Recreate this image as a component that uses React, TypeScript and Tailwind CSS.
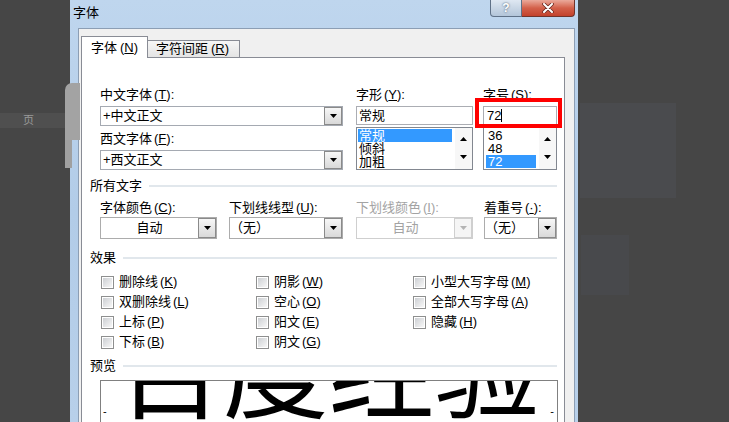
import React from 'react';

function Tri({ color = '#000', up = false }: { color?: string; up?: boolean }) {
  return (
    <svg width="7" height="4" viewBox="0 0 7 4">
      <polygon points={up ? '0,4 7,4 3.5,0' : '0,0 7,0 3.5,4'} fill={color} />
    </svg>
  );
}

function DropBtn({ className, dim = false }: { className: string; dim?: boolean }) {
  return (
    <div
      className={`flex shrink-0 items-center justify-center border ${
        dim ? 'border-[#cfcfcf] bg-[#f5f5f5]' : 'border-[#8a8a8a] bg-gradient-to-b from-[#f7f7f7] to-[#d9d9d9]'
      } ${className}`}
    >
      <Tri color={dim ? '#b4b4b4' : '#000'} />
    </div>
  );
}

function Lbl({ t, k, dim = false }: { t: string; k: string; dim?: boolean }) {
  return (
    <div className={`h-[14px] whitespace-nowrap leading-[14px] ${dim ? 'text-[#a3a3a3]' : ''}`}>
      {t}
      <span className="ml-[2px]">
        (<span className="underline">{k}</span>):
      </span>
    </div>
  );
}

function Group({ t, className }: { t: string; className: string }) {
  return (
    <div className={`flex h-[14px] shrink-0 items-center pl-[8px] pr-[7px] ${className}`}>
      <span className="leading-[14px]">{t}</span>
      <div className="ml-[7px] h-[2px] flex-1 bg-[#e1e7ec]" />
    </div>
  );
}

function Check({ t, k }: { t: string; k: string }) {
  return (
    <div className="flex h-[20px] items-center">
      <div className="h-[13px] w-[13px] border border-[#8e8f8f] bg-white p-[1px]">
        <div className="h-full w-full bg-gradient-to-br from-[#cdd0d4] to-[#f7f7f7]" />
      </div>
      <span className="ml-[5px] whitespace-nowrap leading-[14px]">
        {t}
        <span className="ml-[2px]">
          (<span className="underline">{k}</span>)
        </span>
      </span>
    </div>
  );
}

function ScrollBtns() {
  return (
    <div className="flex w-[17px] shrink-0 flex-col bg-[#f7f7f7]">
      <div className="flex h-[20px] items-center justify-center pt-[2px]">
        <Tri up />
      </div>
      <div className="flex h-[20px] items-center justify-center pb-[2px]">
        <Tri />
      </div>
    </div>
  );
}

export default function App() {
  return (
    <div className="relative flex h-[422px] w-[729px] overflow-hidden bg-[#464646] text-[13px] text-black [font-family:'Liberation_Sans','Noto_Sans_CJK_SC',sans-serif]">
      {/* page behind, left */}
      <div className="flex w-[70px] shrink-0 flex-col">
        <div className="mt-[113px] flex h-[15px] items-center bg-[#4f4f4f] pl-[23px] text-[11px] leading-none text-[#9a9a9a]">
          页
        </div>
      </div>

      {/* dialog */}
      <div className="flex w-[508px] shrink-0 flex-col bg-gradient-to-b from-[#bfd6ee] via-[#b2cce8] to-[#b8d0ea]">
        <div className="flex h-[28px] shrink-0 items-start">
          <div className="mt-[5px] pl-[3px] text-[13px] leading-[16px]">字体</div>
          <div className="flex-1" />
          <div className="mr-[3px] flex h-[17px]">
            <div className="flex w-[32px] items-center justify-center rounded-bl-[4px] border border-t-0 border-[#5f7187] bg-gradient-to-b from-[#dfe8f2] to-[#b3c5d9] text-[12px] font-bold leading-none text-white [text-shadow:0_0_2px_#34465c]">
              ?
            </div>
            <div className="flex w-[53px] items-center justify-center rounded-br-[4px] border border-l-0 border-t-0 border-[#71332a] bg-gradient-to-b from-[#eaa99b] via-[#d3604a] to-[#c3412b]">
              <svg width="12" height="10" viewBox="0 0 12 10">
                <path d="M2 1 L10 9 M10 1 L2 9" stroke="#6b2a22" strokeWidth="3.6" strokeLinecap="round" />
                <path d="M2 1 L10 9 M10 1 L2 9" stroke="#ffffff" strokeWidth="2" strokeLinecap="round" />
              </svg>
            </div>
          </div>
        </div>

        <div className="flex flex-1">
          <div className="w-[8px] shrink-0" />
          <div className="flex w-[497px] shrink-0 flex-col border border-b-0 border-[#8c9eb4] bg-[#f0f0f0] pl-[2px] pt-[7px]">
            {/* tabs */}
            <div className="flex h-[21px] shrink-0 items-end">
              <div className="relative z-10 mb-[-1px] flex h-[22px] w-[67px] items-center border border-b-0 border-[#898c95] bg-white pl-[9px] leading-[14px]">
                字体<span className="ml-[3px]">(<span className="underline">N</span>)</span>
              </div>
              <div className="flex h-[17px] w-[92px] items-center border border-b-0 border-l-0 border-[#898c95] bg-gradient-to-b from-[#f6f6f6] to-[#e4e4e4] pl-[8px] leading-[14px]">
                字符间距<span className="ml-[3px]">(<span className="underline">R</span>)</span>
              </div>
            </div>

            {/* panel */}
            <div className="flex w-[484px] flex-1 flex-col border border-b-0 border-[#898c95] bg-white">
              {/* fonts row */}
              <div className="mt-[30px] flex shrink-0 pl-[18px]">
                <div className="flex w-[243px] flex-col">
                  <Lbl t="中文字体" k="T" />
                  <div className="mt-[4px] flex h-[20px] items-center border border-[#a5aab2] bg-white pl-[2px]">
                    <span className="flex-1 leading-[16px]">+中文正文</span>
                    <DropBtn className="h-[18px] w-[18px]" />
                  </div>
                  <div className="mt-[6px]">
                    <Lbl t="西文字体" k="F" />
                  </div>
                  <div className="mt-[4px] flex h-[20px] items-center border border-[#a5aab2] bg-white pl-[2px]">
                    <span className="flex-1 leading-[16px]">+西文正文</span>
                    <DropBtn className="h-[18px] w-[18px]" />
                  </div>
                </div>

                <div className="ml-[13px] flex w-[117px] flex-col">
                  <Lbl t="字形" k="Y" />
                  <div className="mt-[4px] flex h-[19px] items-center border border-[#abadb3] bg-white pl-[2px] leading-[16px]">
                    常规
                  </div>
                  <div className="mt-[2px] flex h-[43px] border border-[#828790] bg-white">
                    <div className="flex-1 pl-[1px] pr-[3px] pt-[1px] leading-[13px]">
                      <div className="h-[13px] bg-[#3399ff] pl-[1px] text-white">常规</div>
                      <div className="h-[13px] pl-[1px]">倾斜</div>
                      <div className="h-[13px] pl-[1px]">加粗</div>
                    </div>
                    <ScrollBtns />
                  </div>
                </div>

                <div className="ml-[10px] flex w-[74px] flex-col">
                  <Lbl t="字号" k="S" />
                  <div className="mt-[4px] flex h-[19px] items-center border border-[#abadb3] bg-white pl-[3px] leading-[16px]">
                    72<div className="h-[13px] w-[1px] bg-black" />
                  </div>
                  <div className="mt-[2px] flex h-[43px] border border-[#828790] bg-white">
                    <div className="flex-1 pl-[2px] pr-[3px] pt-[1px] leading-[13px]">
                      <div className="h-[13px] pl-[2px]">36</div>
                      <div className="h-[13px] pl-[2px]">48</div>
                      <div className="h-[13px] bg-[#3399ff] pl-[2px] text-white">72</div>
                    </div>
                    <ScrollBtns />
                  </div>
                </div>
              </div>

              {/* 所有文字 */}
              <Group t="所有文字" className="mt-[9px]" />
              <div className="mt-[8px] flex shrink-0 pl-[18px]">
                <div className="flex w-[117px] flex-col">
                  <Lbl t="字体颜色" k="C" />
                  <div className="mt-[2px] flex h-[22px] items-center border border-[#acacac] bg-white">
                    <span className="flex-1 text-center leading-[16px]">自动</span>
                    <DropBtn className="h-[20px] w-[18px]" />
                  </div>
                </div>
                <div className="ml-[12px] flex w-[114px] flex-col">
                  <Lbl t="下划线线型" k="U" />
                  <div className="mt-[2px] flex h-[22px] items-center border border-[#acacac] bg-white">
                    <span className="flex-1 leading-[16px]">（无）</span>
                    <DropBtn className="h-[20px] w-[18px]" />
                  </div>
                </div>
                <div className="ml-[13px] flex w-[117px] flex-col">
                  <Lbl t="下划线颜色" k="I" dim />
                  <div className="mt-[2px] flex h-[22px] items-center border border-[#cfcfcf] bg-white">
                    <span className="flex-1 text-center leading-[16px] text-[#a3a3a3]">自动</span>
                    <DropBtn className="h-[20px] w-[18px]" dim />
                  </div>
                </div>
                <div className="ml-[11px] flex w-[73px] flex-col">
                  <Lbl t="着重号" k="·" />
                  <div className="mt-[2px] flex h-[22px] items-center border border-[#acacac] bg-white">
                    <span className="flex-1 leading-[16px]">（无）</span>
                    <DropBtn className="h-[20px] w-[18px]" />
                  </div>
                </div>
              </div>

              {/* 效果 */}
              <Group t="效果" className="mt-[12px]" />
              <div className="mt-[7px] flex shrink-0 pl-[19px]">
                <div className="flex w-[155px] flex-col">
                  <Check t="删除线" k="K" />
                  <Check t="双删除线" k="L" />
                  <Check t="上标" k="P" />
                  <Check t="下标" k="B" />
                </div>
                <div className="flex w-[157px] flex-col">
                  <Check t="阴影" k="W" />
                  <Check t="空心" k="O" />
                  <Check t="阳文" k="E" />
                  <Check t="阴文" k="G" />
                </div>
                <div className="flex flex-col">
                  <Check t="小型大写字母" k="M" />
                  <Check t="全部大写字母" k="A" />
                  <Check t="隐藏" k="H" />
                </div>
              </div>

              {/* 预览 */}
              <Group t="预览" className="mt-[7px]" />
              <div className="ml-[18px] mt-[7px] flex h-[60px] w-[458px] shrink-0 overflow-hidden border border-[#808080] bg-white">
                <div className="ml-[2px] mt-[28px] text-[11px] leading-[4px]">-</div>
                <div className="mt-[-70px] flex-1 whitespace-nowrap text-center text-[106px] leading-[106px] [font-family:'Noto_Sans_CJK_SC',sans-serif]">
                  百度经验
                </div>
                <div className="mr-[3px] mt-[28px] text-[11px] leading-[4px]">-</div>
              </div>
            </div>
          </div>
          <div className="w-[3px] shrink-0" />
        </div>
      </div>

      {/* page behind, right */}
      <div className="flex flex-1 flex-col">
        <div className="ml-[2px] mt-[103px] h-[95px] w-[96px] bg-[#4a4b4e]" />
        <div className="ml-[3px] mt-[37px] h-[60px] w-[48px] bg-[#48494c]" />
      </div>

      {/* overlays */}
      <div className="absolute left-[65px] top-[83px] h-[57px] w-[15px] rounded-tl-[7px] bg-[#a3a3a3]" />
      <div className="absolute left-[65px] top-[140px] h-[28px] w-[7px] bg-[#a0a0a0]" />
      <div className="absolute left-[475px] top-[98px] h-[30px] w-[87px] border-[4px] border-[#ff0000]" />
    </div>
  );
}
